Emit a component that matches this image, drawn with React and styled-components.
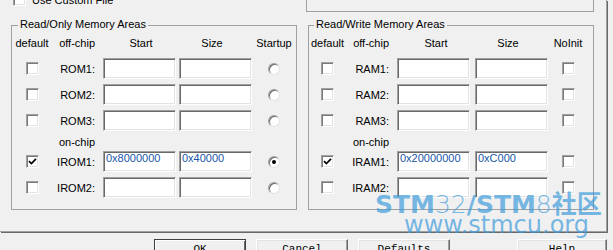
import React from 'react'
import styled, { createGlobalStyle } from 'styled-components'

const Global = createGlobalStyle`
  body {
    margin: 0;
    background: #f0f0f0;
    font-family: 'Liberation Sans', Arial, sans-serif;
    font-size: 11px;
    color: #000;
  }
`

const Page = styled.div`
  position: relative;
  width: 613px;
  height: 250px;
  overflow: hidden;
  background: #f0f0f0;
`

const Panel = styled.div`
  width: 607px;
  height: 232px;
  box-sizing: border-box;
  border-right: 1px solid #a0a0a0;
  border-bottom: 1px solid #a0a0a0;
  box-shadow: 1px 1px 0 #696969;
`

const TopRow = styled.div`
  display: flex;
  height: 12px;
`

const CustomFile = styled.div`
  display: flex;
  align-items: center;
  gap: 6px;
  margin-left: 13px;
  margin-top: -7px;
  height: 13px;
`

const TopBox = styled.div`
  margin-left: auto;
  margin-right: 12px;
  width: 288px;
  height: 12px;
  box-sizing: border-box;
  border: 1px solid #a0a0a0;
  border-top: none;
`

const Groups = styled.div`
  display: flex;
  gap: 11px;
  padding-left: 11px;
  margin-top: 13px;
`

const Group = styled.div`
  position: relative;
  width: 286px;
  box-sizing: border-box;
  border: 1px solid #a0a0a0;
  padding: 7px 0 11px;
  display: grid;
  grid-template-columns: ${(p) => p.$cols};
  grid-template-rows: 20px 21px 21px 21px 10px 21px 21px;
  row-gap: 5px;
  align-items: center;
`

const Legend = styled.span`
  position: absolute;
  top: -8px;
  left: ${(p) => p.$left}px;
  padding: 0 2px;
  line-height: 13px;
  background: #f0f0f0;
`

const Head = styled.div`
  justify-self: ${(p) => (p.$right ? 'end' : 'center')};
  padding-right: ${(p) => p.$pr || 0}px;
  width: ${(p) => (p.$w ? `${p.$w}px` : 'auto')};
  text-align: center;
  box-sizing: border-box;
  line-height: 13px;
`

const Label = styled.div`
  justify-self: end;
  padding-right: 8px;
  line-height: 13px;
  margin-top: 2px;
`

const Box = styled.div`
  justify-self: center;
  width: 13px;
  height: 13px;
  box-sizing: border-box;
  background: #fff;
  border: 1px solid;
  border-color: #a0a0a0 #fff #fff #a0a0a0;
  box-shadow: inset 1px 1px 0 #7a7a7a, inset -1px -1px 0 #e3e3e3;
  display: flex;
  align-items: center;
  justify-content: center;
`

const Radio = styled.div`
  justify-self: center;
  width: 12px;
  height: 12px;
  box-sizing: border-box;
  border-radius: 50%;
  background: #fff;
  border: 1px solid;
  border-color: #a0a0a0 #e3e3e3 #e3e3e3 #a0a0a0;
  box-shadow: inset 1px 1px 0 #696969;
  display: flex;
  align-items: center;
  justify-content: center;
  &::after {
    content: '';
    display: ${(p) => (p.$on ? 'block' : 'none')};
    width: 4px;
    height: 4px;
    border-radius: 50%;
    background: #000;
  }
`

const Edit = styled.div`
  width: 73px;
  height: 21px;
  box-sizing: border-box;
  background: #fff;
  border: 1px solid;
  border-color: #a0a0a0 #fff #fff #a0a0a0;
  box-shadow: inset 1px 1px 0 #696969, inset -1px -1px 0 #e3e3e3;
  padding: 0 2px;
  line-height: 13px;
  color: #1a56a8;
  white-space: nowrap;
`

const Buttons = styled.div`
  display: flex;
  gap: 10px;
  margin-top: 7px;
  padding-left: 154px;
  padding-right: 6px;
`

const Button = styled.div`
  width: ${(p) => p.$w || 92}px;
  height: 23px;
  box-sizing: border-box;
  margin-left: ${(p) => (p.$push ? 'auto' : '0')};
  border: 1px solid;
  border-color: ${(p) => (p.$def ? '#404040' : '#fff #696969 #696969 #fff')};
  box-shadow: ${(p) =>
    p.$def
      ? 'inset 1px 1px 0 #fff, inset -1px -1px 0 #696969'
      : 'inset -1px -1px 0 #a0a0a0, inset 1px 1px 0 #e3e3e3'};
  font-family: 'Liberation Mono', 'Courier New', monospace;
  font-size: 11px;
  text-align: center;
  line-height: 19px;
`

const Watermark = styled.div`
  position: absolute;
  left: 375px;
  top: 192px;
  display: flex;
  flex-direction: column;
  align-items: flex-start;
  color: rgba(60, 155, 220, 0.7);
  font-family: 'DejaVu Sans', 'Noto Sans CJK SC', sans-serif;
  pointer-events: none;
`

const MarkTop = styled.div`
  font-size: 25px;
  line-height: 25px;
  font-weight: bold;
  white-space: nowrap;
  span { font-weight: 200; }
`

const MarkUrl = styled.div`
  font-size: 24px;
  line-height: 24px;
  margin-top: -4px;
  margin-left: 29px;
  white-space: nowrap;
`

function Check({ on }) {
  return (
    <Box>
      {on && (
        <svg width="9" height="9" viewBox="0 0 9 9">
          <path d="M1 4.2 L3.4 6.6 L8 1.8" fill="none" stroke="#000" strokeWidth="1.7" />
        </svg>
      )}
    </Box>
  )
}

const RadioMark = ({ on }) => <Radio $on={on} />

function MemGroup({ title, legendLeft, cols, last, lastMark, rows }) {
  const Mark = lastMark
  return (
    <Group $cols={cols}>
      <Legend $left={legendLeft}>{title}</Legend>
      <Head>default</Head>
      <Head $right $pr={8}>off-chip</Head>
      <Head $w={73}>Start</Head>
      <Head $w={73} $pr={7}>Size</Head>
      <Head>{last}</Head>
      {rows.map((r, i) =>
        r.sep ? (
          <React.Fragment key={i}>
            <span />
            <Label>on-chip</Label>
            <span />
            <span />
            <span />
          </React.Fragment>
        ) : (
          <React.Fragment key={i}>
            <Check on={r.def} />
            <Label>{r.name}:</Label>
            <Edit>{r.start}</Edit>
            <Edit>{r.size}</Edit>
            <Mark on={r.mark} />
          </React.Fragment>
        )
      )}
    </Group>
  )
}

const romRows = [
  { name: 'ROM1' },
  { name: 'ROM2' },
  { name: 'ROM3' },
  { sep: true },
  { name: 'IROM1', def: true, start: '0x8000000', size: '0x40000', mark: true },
  { name: 'IROM2' },
]

const ramRows = [
  { name: 'RAM1' },
  { name: 'RAM2' },
  { name: 'RAM3' },
  { sep: true },
  { name: 'IRAM1', def: true, start: '0x20000000', size: '0xC000' },
  { name: 'IRAM2' },
]

export default function App() {
  return (
    <Page>
      <Global />
      <Panel>
        <TopRow>
          <CustomFile>
            <Check />
            <span>Use Custom File</span>
          </CustomFile>
          <TopBox />
        </TopRow>
        <Groups>
          <MemGroup
            title="Read/Only Memory Areas"
            legendLeft={6}
            cols="40px 51px 76px 73px 44px"
            last="Startup"
            lastMark={RadioMark}
            rows={romRows}
          />
          <MemGroup
            title="Read/Write Memory Areas"
            legendLeft={5}
            cols="37px 51px 78px 73px 40px"
            last="NoInit"
            lastMark={Check}
            rows={ramRows}
          />
        </Groups>
      </Panel>
      <Buttons>
        <Button $def>OK</Button>
        <Button>Cancel</Button>
        <Button>Defaults</Button>
        <Button $w={90} $push>Help</Button>
      </Buttons>
      <Watermark>
        <MarkTop>
          STM<span>32</span>/STM<span>8</span>社区
        </MarkTop>
        <MarkUrl>www.stmcu.org</MarkUrl>
      </Watermark>
    </Page>
  )
}
